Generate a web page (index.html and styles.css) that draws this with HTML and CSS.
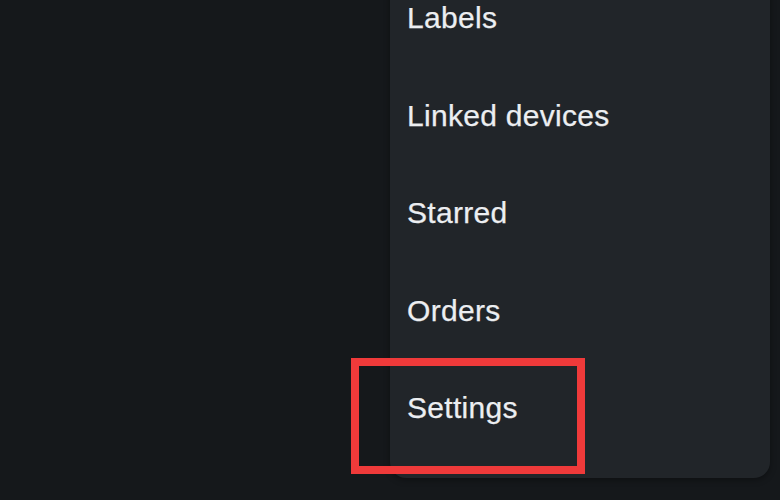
FILE: index.html
```html
<!DOCTYPE html>
<html lang="en">
<head>
<meta charset="utf-8">
<link rel="stylesheet" href="styles.css">
</head>
<body>
<div class="page">
  <ul class="menu">
    <li class="item">Labels</li>
    <li class="item">Linked devices</li>
    <li class="item">Starred</li>
    <li class="item">Orders</li>
    <li class="item item-marked">Settings<span class="highlight"></span></li>
  </ul>
</div>
</body>
</html>
```

FILE: styles.css
```css
html, body {
  margin: 0;
  padding: 0;
  background: #15181b;
  height: 100%;
  overflow: hidden;
}
.page {
  display: flex;
  justify-content: flex-end;
  padding-right: 10px;
  height: 500px;
  align-items: flex-start;
}
.menu {
  list-style: none;
  margin: -31px 0 0 0;
  padding: 0 0 21px 0;
  width: 380px;
  background: #212529;
  border-radius: 0 0 16px 16px;
  box-shadow: 0 2px 6px rgba(0,0,0,0.35);
  font-family: "Liberation Sans", Arial, sans-serif;
  font-size: 30px;
  letter-spacing: 0.3px;
  color: #eceef1;
  -webkit-text-stroke: 0.25px #eceef1;
}
.item {
  height: 97.5px;
  line-height: 97.5px;
  padding-left: 17px;
}
.item-marked {
  position: relative;
}
.highlight {
  position: absolute;
  left: -39px;
  top: -1px;
  width: 218px;
  height: 100px;
  border: 8px solid #ef3a3a;
}
```
